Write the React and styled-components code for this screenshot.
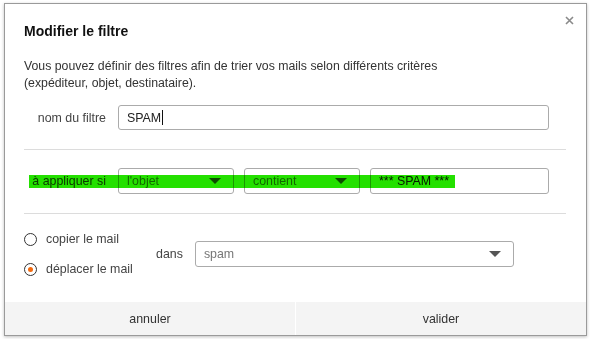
import React, { useState } from 'react';
import styled, { createGlobalStyle } from 'styled-components';

const GlobalStyle = createGlobalStyle`
  html, body {
    margin: 0;
    padding: 0;
    background: #ffffff;
  }
  body {
    font-family: "Liberation Sans", Arial, sans-serif;
    font-size: 12.4px;
    color: #333;
  }
`;

const Page = styled.div`
  padding: 3px 4px;
`;

const Dialog = styled.div`
  position: relative;
  box-sizing: border-box;
  width: 583px;
  height: 333px;
  border: 1px solid #9a9a9a;
  box-shadow: 0 1px 3px rgba(0, 0, 0, 0.25);
  background: #fff;
  display: flex;
  flex-direction: column;
`;

const Close = styled.button`
  position: absolute;
  top: 8px;
  right: 9px;
  width: 16px;
  height: 16px;
  padding: 0;
  border: none;
  background: none;
  display: flex;
  align-items: center;
  justify-content: center;
  cursor: pointer;
`;

const Body = styled.div`
  padding: 19px 20px 0 19px;
  flex: 1;
`;

const Title = styled.h2`
  margin: 0;
  font-size: 14px;
  line-height: 17px;
  font-weight: bold;
  color: #111;
`;

const Description = styled.p`
  margin: 18px 0 0;
  font-size: 12.3px;
  line-height: 17px;
  color: #333;
`;

const Row = styled.div`
  position: relative;
  display: flex;
  align-items: center;
  gap: ${(p) => p.$gap || 12}px;
  padding-right: 17px;
  margin-top: ${(p) => p.$top || 0}px;
`;

const Label = styled.label`
  width: 82px;
  flex: none;
  text-align: right;
  color: #444;
  margin-right: ${(p) => p.$space || 0}px;
`;

const TextInput = styled.div`
  box-sizing: border-box;
  height: ${(p) => p.$h || 25}px;
  flex: 1;
  border: 1px solid #ababab;
  border-radius: 3px;
  padding: 0 8px;
  display: flex;
  align-items: center;
  color: #222;
  background: transparent;
`;

const Caret = styled.span`
  display: inline-block;
  width: 1px;
  height: 15px;
  background: #111;
  margin-left: 1px;
`;

const Select = styled.div`
  box-sizing: border-box;
  height: ${(p) => p.$h || 26}px;
  width: ${(p) => p.$w}px;
  flex: none;
  border: 1px solid #ababab;
  border-radius: 3px;
  padding: 0 12px 0 8px;
  display: flex;
  align-items: center;
  justify-content: space-between;
  color: #777;
  background: transparent;
`;

const Arrow = styled.span`
  width: 0;
  height: 0;
  border-left: 6px solid transparent;
  border-right: 6px solid transparent;
  border-top: 6px solid #555;
`;

const Divider = styled.hr`
  margin: ${(p) => p.$top}px 0 0;
  border: none;
  border-top: 1px solid #dcdcdc;
`;

const Highlight = styled.div`
  position: absolute;
  left: 5px;
  top: 7px;
  width: 426px;
  height: 13px;
  background: #24e000;
  mix-blend-mode: multiply;
  pointer-events: none;
`;

const RadioGroup = styled.div`
  display: flex;
  flex-direction: column;
  width: 120px;
  flex: none;
`;

const RadioOption = styled.label`
  display: flex;
  align-items: center;
  gap: 9px;
  height: 30px;
  color: #444;
  cursor: pointer;
`;

const RadioCircle = styled.span`
  box-sizing: border-box;
  width: 13px;
  height: 13px;
  border-radius: 50%;
  border: 1.5px solid #333;
  display: flex;
  align-items: center;
  justify-content: center;

  &::after {
    content: '';
    width: 5px;
    height: 5px;
    border-radius: 50%;
    background: ${(p) => (p.$checked ? '#f26a0f' : 'transparent')};
  }
`;

const Dans = styled.span`
  color: #444;
`;

const Footer = styled.div`
  display: flex;
  height: 33px;
  gap: 1px;
  background: #fff;
`;

const FooterButton = styled.button`
  flex: 1;
  border: none;
  background: #f4f4f4;
  font-family: inherit;
  font-size: 12.4px;
  color: #333;
  cursor: pointer;
`;

export default function App() {
  const [mode, setMode] = useState('move');

  return (
    <Page>
      <GlobalStyle />
      <Dialog>
        <Close aria-label="fermer">
          <svg width="9" height="9" viewBox="0 0 9 9">
            <path d="M1 1L8 8M8 1L1 8" stroke="#8a8a8a" strokeWidth="1.6" />
          </svg>
        </Close>
        <Body>
          <Title>Modifier le filtre</Title>
          <Description>
            Vous pouvez définir des filtres afin de trier vos mails selon différents critères
            <br />
            (expéditeur, objet, destinataire).
          </Description>

          <Row $top={13}>
            <Label>nom du filtre</Label>
            <TextInput>
              SPAM
              <Caret />
            </TextInput>
          </Row>

          <Divider $top={19} />

          <Row $top={18} $gap={10}>
            <Label $space={2}>à appliquer si</Label>
            <Select $w={116}>
              l'objet
              <Arrow />
            </Select>
            <Select $w={116}>
              contient
              <Arrow />
            </Select>
            <TextInput $h={26}>*** SPAM ***</TextInput>
            <Highlight />
          </Row>

          <Divider $top={19} />

          <Row $top={10} $gap={12}>
            <RadioGroup>
              <RadioOption onClick={() => setMode('copy')}>
                <RadioCircle $checked={mode === 'copy'} />
                copier le mail
              </RadioOption>
              <RadioOption onClick={() => setMode('move')}>
                <RadioCircle $checked={mode === 'move'} />
                déplacer le mail
              </RadioOption>
            </RadioGroup>
            <Dans>dans</Dans>
            <Select $w={319} $h={26}>
              spam
              <Arrow />
            </Select>
          </Row>
        </Body>
        <Footer>
          <FooterButton>annuler</FooterButton>
          <FooterButton>valider</FooterButton>
        </Footer>
      </Dialog>
    </Page>
  );
}
